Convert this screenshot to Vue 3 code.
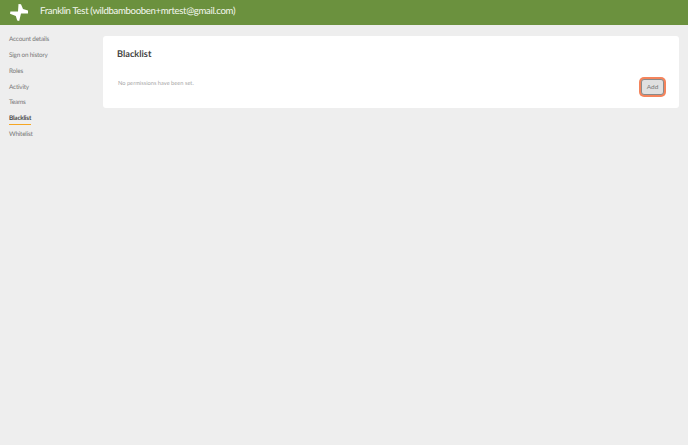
<script setup>
const links = ['Account details', 'Sign on history', 'Roles', 'Activity', 'Teams', 'Blacklist', 'Whitelist']
const active = 'Blacklist'
</script>

<template>
  <div class="page">
    <header class="top">
      <svg class="logo" width="20" height="20" viewBox="10 3 20 20">
        <path d="M18.5 4 L21 4.3 L23 9 L28 10.5 L28 13.6 L21 13.4 L19.2 21 L17.2 20.6 L15.8 16 L10 13.8 L10.4 11.4 L18 11.6 Z" fill="#fff" />
      </svg>
      <span class="name">Franklin Test (wildbambooben+mrtest@gmail.com)</span>
    </header>
    <div class="body">
      <nav class="side">
        <a v-for="l in links" :key="l" class="link" :class="{ on: l === active }">{{ l }}</a>
      </nav>
      <main class="card">
        <h1>Blacklist</h1>
        <div class="row">
          <p>No permissions have been set.</p>
          <button type="button">Add</button>
        </div>
      </main>
    </div>
  </div>
</template>

<style>
html, body { margin: 0; background: #eeeeee; }
</style>

<style scoped>
.page { width: 688px; height: 445px; background: #eeeeee; font-family: Lato, "Open Sans", sans-serif; overflow: hidden; text-rendering: geometricPrecision; }
.top { height: 25px; background: #6b913e; display: flex; align-items: center; padding-left: 10px; box-sizing: border-box; }
.logo { flex: none; }
.name { margin-left: 10px; color: #f4f7ef; font-size: 9.6px; letter-spacing: -0.34px; line-height: 25px; margin-top: -3px; white-space: nowrap; }
.body { display: flex; align-items: flex-start; padding: 10px 9px 0 9px; }
.side { width: 94px; flex: none; display: flex; flex-direction: column; gap: 5.85px; }
.link { font-size: 6.4px; letter-spacing: -0.2px; line-height: 10px; color: #777; align-self: flex-start; }
.link.on { color: #444; font-weight: 700; box-shadow: 0 1px 0 #f5a623; }
.card { flex: 1; height: 72px; margin-top: 1px; box-sizing: border-box; background: #fff; border-radius: 3px; padding: 12px 14px 0; }
h1 { margin: 0; font-size: 9.2px; line-height: 12px; font-weight: 700; color: #454545; }
.row { display: flex; justify-content: space-between; align-items: flex-start; margin-top: 15px; }
p { margin: 0; padding: 5px 0 0 1px; font-size: 5.7px; line-height: 8px; color: #a5a5a5; }
button { width: 21px; height: 14px; margin: 4px 1px 0 0; padding: 0; box-sizing: content-box; font: 6.5px/14px Lato, sans-serif; color: #777; background: #e0e0e0; border: 1px solid #8a8a8a; border-radius: 3px; box-shadow: 0 0 0 2px #f4845c; }
</style>
